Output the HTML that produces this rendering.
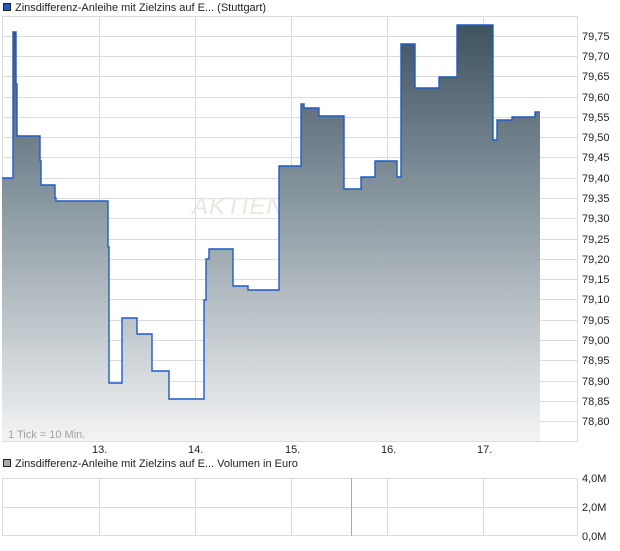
<!DOCTYPE html>
<html><head><meta charset="utf-8"><style>
body{margin:0;background:#fff;width:620px;height:546px;overflow:hidden;font-family:"Liberation Sans",sans-serif;}
</style></head><body>
<svg width="620" height="546" xmlns="http://www.w3.org/2000/svg" font-family="Liberation Sans, sans-serif" font-size="11">
<defs>
<linearGradient id="g" gradientUnits="userSpaceOnUse" x1="0" y1="22" x2="0" y2="442">
<stop offset="0" stop-color="#3d515f"/><stop offset="0.45" stop-color="#8d9ba3"/><stop offset="1" stop-color="#f3f4f5"/>
</linearGradient>
</defs>
<rect x="3.5" y="3.5" width="7" height="7" fill="#1f5bc6" stroke="#222" stroke-width="1"/>
<text x="15" y="11" fill="#222">Zinsdifferenz-Anleihe mit Zielzins auf E... (Stuttgart)</text>
<g stroke="#dcdcdc" stroke-width="1">
<line x1="2" y1="36.5" x2="578" y2="36.5"/><line x1="2" y1="56.5" x2="578" y2="56.5"/><line x1="2" y1="76.5" x2="578" y2="76.5"/><line x1="2" y1="97.5" x2="578" y2="97.5"/><line x1="2" y1="117.5" x2="578" y2="117.5"/><line x1="2" y1="137.5" x2="578" y2="137.5"/><line x1="2" y1="157.5" x2="578" y2="157.5"/><line x1="2" y1="178.5" x2="578" y2="178.5"/><line x1="2" y1="198.5" x2="578" y2="198.5"/><line x1="2" y1="218.5" x2="578" y2="218.5"/><line x1="2" y1="239.5" x2="578" y2="239.5"/><line x1="2" y1="259.5" x2="578" y2="259.5"/><line x1="2" y1="279.5" x2="578" y2="279.5"/><line x1="2" y1="299.5" x2="578" y2="299.5"/><line x1="2" y1="320.5" x2="578" y2="320.5"/><line x1="2" y1="340.5" x2="578" y2="340.5"/><line x1="2" y1="360.5" x2="578" y2="360.5"/><line x1="2" y1="381.5" x2="578" y2="381.5"/><line x1="2" y1="401.5" x2="578" y2="401.5"/><line x1="2" y1="421.5" x2="578" y2="421.5"/>
<line x1="99.5" y1="16" x2="99.5" y2="442"/><line x1="195.5" y1="16" x2="195.5" y2="442"/><line x1="291.5" y1="16" x2="291.5" y2="442"/><line x1="387.5" y1="16" x2="387.5" y2="442"/><line x1="483.5" y1="16" x2="483.5" y2="442"/>
<rect x="2.5" y="16.5" width="575" height="425" fill="none"/>
</g>
<text x="192" y="214" font-size="24" font-style="italic" fill="#ebe6df" letter-spacing="1">AKTIEN</text>
<path d="M2,178 H13 V32 H16 V84 H17 V136 H40 V161 H41 V185 H55 V198 H56 V201 H108 V247 H109 V383 H122 V318 H137 V334 H152 V371 H169 V399 H204 V300 H206 V259 H209 V249 H233 V286 H248 V290 H279 V166 H301 V104 H304 V108 H319 V116 H344 V189 H361 V177 H375 V161 H397 V177 H401 V44 H415 V88 H439 V77 H457 V25 H493 V140 H497 V120 H512 V117 H535 V112 H540 V441 H2 Z" fill="url(#g)"/>
<path d="M2,178 H13 V32 H16 V84 H17 V136 H40 V161 H41 V185 H55 V198 H56 V201 H108 V247 H109 V383 H122 V318 H137 V334 H152 V371 H169 V399 H204 V300 H206 V259 H209 V249 H233 V286 H248 V290 H279 V166 H301 V104 H304 V108 H319 V116 H344 V189 H361 V177 H375 V161 H397 V177 H401 V44 H415 V88 H439 V77 H457 V25 H493 V140 H497 V120 H512 V117 H535 V112 H540" fill="none" stroke="#1f5bc6" stroke-width="1.4"/>
<text x="8" y="438" fill="#a0a0a0">1 Tick = 10 Min.</text>
<g fill="#222">
<text x="582" y="40">79,75</text><text x="582" y="80">79,65</text><text x="582" y="60">79,70</text><text x="582" y="101">79,60</text><text x="582" y="121">79,55</text><text x="582" y="141">79,50</text><text x="582" y="161">79,45</text><text x="582" y="182">79,40</text><text x="582" y="202">79,35</text><text x="582" y="222">79,30</text><text x="582" y="243">79,25</text><text x="582" y="263">79,20</text><text x="582" y="283">79,15</text><text x="582" y="303">79,10</text><text x="582" y="324">79,05</text><text x="582" y="344">79,00</text><text x="582" y="364">78,95</text><text x="582" y="385">78,90</text><text x="582" y="405">78,85</text><text x="582" y="425">78,80</text>
<text x="92" y="453">13.</text><text x="188" y="453">14.</text><text x="285" y="453">15.</text><text x="381" y="453">16.</text><text x="477" y="453">17.</text>
</g>
<rect x="3.5" y="459.5" width="7" height="7" fill="#aaa" stroke="#222" stroke-width="1"/>
<text x="15" y="467" fill="#222">Zinsdifferenz-Anleihe mit Zielzins auf E... Volumen in Euro</text>
<g stroke="#dcdcdc" stroke-width="1">
<line x1="2" y1="507.5" x2="578" y2="507.5"/>
<line x1="99.5" y1="478" x2="99.5" y2="536"/><line x1="195.5" y1="478" x2="195.5" y2="536"/><line x1="291.5" y1="478" x2="291.5" y2="536"/><line x1="387.5" y1="478" x2="387.5" y2="536"/><line x1="483.5" y1="478" x2="483.5" y2="536"/>
<rect x="2.5" y="478.5" width="575" height="57" fill="none"/>
</g>
<line x1="351.5" y1="478" x2="351.5" y2="536" stroke="#aaa"/>
<g fill="#222"><text x="582" y="482">4,0M</text><text x="582" y="511">2,0M</text><text x="582" y="540">0,0M</text></g>
</svg>
</body></html>
